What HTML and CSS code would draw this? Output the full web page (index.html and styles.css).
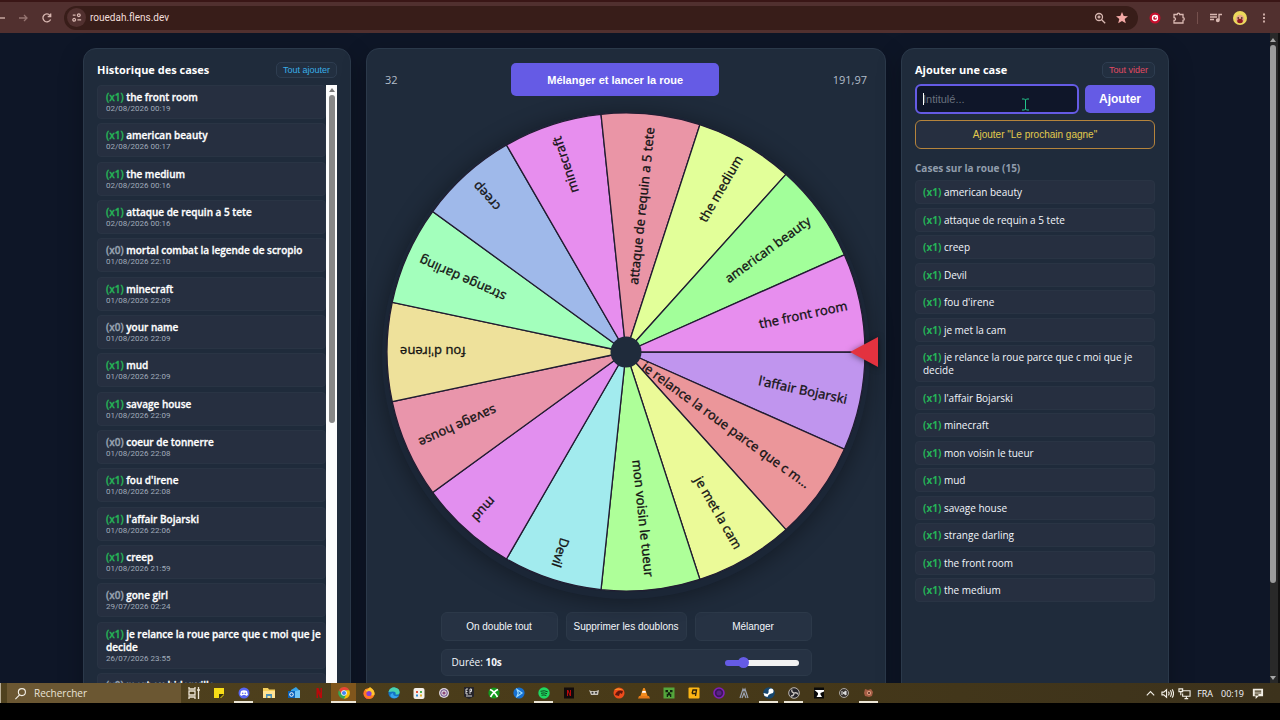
FILE: index.html
```html
<!DOCTYPE html>
<html lang="fr">
<head>
<meta charset="utf-8">
<title>Roue</title>
<link rel="stylesheet" href="styles.css">
</head>
<body>
<header class="toolbar">
  <button class="tb-btn back" aria-label="Précédent"><svg viewBox="0 0 14 14"><path d="M0 7h5"/></svg></button>
  <button class="tb-btn dim" aria-label="Suivant"><svg viewBox="0 0 14 14"><path d="M3 7h8M8 4l3 3-3 3"/></svg></button>
  <button class="tb-btn" aria-label="Actualiser"><svg viewBox="0 0 14 14"><path d="M10.600 8.500A4 4 0 1 1 10 4.300M10.700 2.500v3H7.700"/></svg></button>
  <div class="omnibox">
    <span class="site"><svg viewBox="0 0 14 14"><path d="M3 4.500h3M8 9.500h4"/><circle cx="9.500" cy="4.500" r="1.500"/><circle cx="4.500" cy="9.500" r="1.500"/></svg></span>
    <span class="url">rouedah.flens.dev</span>
    <svg viewBox="0 0 14 14"><circle cx="6" cy="6" r="3.500"/><path d="M8.700 8.700l3.500 3.500M4.500 6h3M6 4.500v3"/></svg>
    <svg class="star" viewBox="0 0 14 14"><path d="M7 1l1.700 4 4.300.3-3.300 2.700 1.100 4.200L7 9.900l-3.800 2.300L4.300 8 1 5.300 5.300 5z"/></svg>
  </div>
  <svg viewBox="0 0 14 14"><circle cx="7" cy="7" r="5.500" fill="#c8102e" stroke="none"/><circle cx="7" cy="7" r="2.500" stroke="#fff"/><path d="M7 7l2.500-2.500" stroke="#fff"/></svg>
  <svg viewBox="0 0 14 14"><path d="M2 3.500h3.200a1.300 1.300 0 0 1 2.600 0H11v3.200a1.300 1.300 0 0 1 0 2.600V12H2V9.500a1.500 1.500 0 0 0 0-3z"/></svg>
  <span class="sep"></span>
  <svg viewBox="0 0 14 14"><path d="M1 3.500h7M1 6h7M1 8.500h4M10 9V3.500h3"/><circle cx="8.800" cy="9.300" r="1.300" fill="#d9b8b2"/></svg>
  <svg class="avatar" viewBox="0 0 14 14"><circle cx="7" cy="7" r="7" fill="#ecd95b" stroke="none"/><circle cx="7" cy="8" r="4.300" fill="#e7a987" stroke="none"/><ellipse cx="7" cy="10" rx="2.800" ry="2.200" fill="#8e1a22" stroke="none"/><path d="M4.500 7h1.500M8 7h1.500" stroke="#3b2020"/></svg>
  <svg viewBox="0 0 14 14"><path d="M7 2.500v2M7 6v2M7 9.500v2" stroke-width="1.800"/></svg>
</header>

<main class="viewport">
  <div class="page">
    <section class="panel side">
      <div class="head"><h2>Historique des cases</h2><button class="mini blue">Tout ajouter</button></div>
      <div class="scroller">
        <ul class="history">
          <li><p><b class="on">(x1)</b> the front room</p><time>02/08/2026 00:19</time></li>
          <li><p><b class="on">(x1)</b> american beauty</p><time>02/08/2026 00:17</time></li>
          <li><p><b class="on">(x1)</b> the medium</p><time>02/08/2026 00:16</time></li>
          <li><p><b class="on">(x1)</b> attaque de requin a 5 tete</p><time>02/08/2026 00:16</time></li>
          <li><p><b>(x0)</b> mortal combat la legende de scropio</p><time>01/08/2026 22:10</time></li>
          <li><p><b class="on">(x1)</b> minecraft</p><time>01/08/2026 22:09</time></li>
          <li><p><b>(x0)</b> your name</p><time>01/08/2026 22:09</time></li>
          <li><p><b class="on">(x1)</b> mud</p><time>01/08/2026 22:09</time></li>
          <li><p><b class="on">(x1)</b> savage house</p><time>01/08/2026 22:09</time></li>
          <li><p><b>(x0)</b> coeur de tonnerre</p><time>01/08/2026 22:08</time></li>
          <li><p><b class="on">(x1)</b> fou d'irene</p><time>01/08/2026 22:08</time></li>
          <li><p><b class="on">(x1)</b> l'affair Bojarski</p><time>01/08/2026 22:06</time></li>
          <li><p><b class="on">(x1)</b> creep</p><time>01/08/2026 21:59</time></li>
          <li><p><b>(x0)</b> gone girl</p><time>29/07/2026 02:24</time></li>
          <li><p><b class="on">(x1)</b> je relance la roue parce que c moi que je decide</p><time>26/07/2026 23:55</time></li>
          <li><p><b>(x0)</b> mort au bidonville</p></li>
        </ul>
        <div class="bar light"><svg viewBox="0 0 10 10"><path d="M5 3l3 4H2z"/></svg><i></i></div>
      </div>
    </section>

    <section class="panel center">
      <div class="launch"><span>32</span><button class="primary">Mélanger et lancer la roue</button><span>191,97</span></div>
      <div class="wheel">
        <svg viewBox="-240 -240 480 480" role="img" aria-label="Roue">
          <defs><path id="slice" d="M0 0H239A239 239 0 0 1 218.340 97.210Z"/></defs>
          <g><use href="#slice" fill="#c095ee"/><text transform="rotate(12)" x="226" y="5">l'affair Bojarski</text></g>
          <g transform="rotate(24)"><use href="#slice" fill="#eb969a"/><text transform="rotate(12)" x="226" y="5">je relance la roue parce que c m...</text></g>
          <g transform="rotate(48)"><use href="#slice" fill="#ebfa98"/><text transform="rotate(12)" x="226" y="5">je met la cam</text></g>
          <g transform="rotate(72)"><use href="#slice" fill="#aeff99"/><text transform="rotate(12)" x="226" y="5">mon voisin le tueur</text></g>
          <g transform="rotate(96)"><use href="#slice" fill="#a2ebee"/><text transform="rotate(12)" x="226" y="5">Devil</text></g>
          <g transform="rotate(120)"><use href="#slice" fill="#e28fef"/><text transform="rotate(12)" x="226" y="5">mud</text></g>
          <g transform="rotate(144)"><use href="#slice" fill="#e995ab"/><text transform="rotate(12)" x="226" y="5">savage house</text></g>
          <g transform="rotate(168)"><use href="#slice" fill="#eee19b"/><text transform="rotate(12)" x="226" y="5">fou d'irene</text></g>
          <g transform="rotate(192)"><use href="#slice" fill="#a3ffbc"/><text transform="rotate(12)" x="226" y="5">strange darling</text></g>
          <g transform="rotate(216)"><use href="#slice" fill="#9fb9ea"/><text transform="rotate(12)" x="226" y="5">creep</text></g>
          <g transform="rotate(240)"><use href="#slice" fill="#e78eee"/><text transform="rotate(12)" x="226" y="5">minecraft</text></g>
          <g transform="rotate(264)"><use href="#slice" fill="#ea95a6"/><text transform="rotate(12)" x="226" y="5">attaque de requin a 5 tete</text></g>
          <g transform="rotate(288)"><use href="#slice" fill="#e2ff99"/><text transform="rotate(12)" x="226" y="5">the medium</text></g>
          <g transform="rotate(312)"><use href="#slice" fill="#a2ff9a"/><text transform="rotate(12)" x="226" y="5">american beauty</text></g>
          <g transform="rotate(336)"><use href="#slice" fill="#e78eee"/><text transform="rotate(12)" x="226" y="5">the front room</text></g>
          <circle r="15.500" fill="#1f2b3b"/>
        </svg>
        <svg class="pointer" viewBox="0 0 28 32"><path d="M0 16L28 1V31Z"/></svg>
      </div>
      <div class="controls">
        <button>On double tout</button><button>Supprimer les doublons</button><button>Mélanger</button>
        <div class="duration"><label for="duree">Durée: <strong>10s</strong></label><input id="duree" type="range" min="0" max="60" value="13"></div>
      </div>
    </section>

    <section class="panel side">
      <div class="head"><h2>Ajouter une case</h2><button class="mini red">Tout vider</button></div>
      <form class="add">
        <div class="field"><input type="text" placeholder="Intitulé..." aria-label="Intitulé"><span class="caret"></span>
          <svg class="ibeam" viewBox="0 0 9 13"><path d="M1 1h2.500l1 1 1-1H8M4.500 2v9M1 12h2.500l1-1 1 1H8"/></svg></div>
        <button type="button" class="primary">Ajouter</button>
      </form>
      <button class="next">Ajouter "Le prochain gagne"</button>
      <h3>Cases sur la roue (15)</h3>
      <ul class="cases">
        <li><b>(x1)</b> american beauty</li>
        <li><b>(x1)</b> attaque de requin a 5 tete</li>
        <li><b>(x1)</b> creep</li>
        <li><b>(x1)</b> Devil</li>
        <li><b>(x1)</b> fou d'irene</li>
        <li><b>(x1)</b> je met la cam</li>
        <li><b>(x1)</b> je relance la roue parce que c moi que je decide</li>
        <li><b>(x1)</b> l'affair Bojarski</li>
        <li><b>(x1)</b> minecraft</li>
        <li><b>(x1)</b> mon voisin le tueur</li>
        <li><b>(x1)</b> mud</li>
        <li><b>(x1)</b> savage house</li>
        <li><b>(x1)</b> strange darling</li>
        <li><b>(x1)</b> the front room</li>
        <li><b>(x1)</b> the medium</li>
      </ul>
    </section>
  </div>
  <div class="bar dark"><svg viewBox="0 0 10 10"><path d="M5 3l3 4H2z"/></svg><i></i><svg class="down" viewBox="0 0 10 10"><path d="M5 7l3-4H2z"/></svg></div>
</main>

<footer class="taskbar">
  <span class="edge"></span>
  <label class="search"><svg viewBox="0 0 14 14"><circle cx="8.500" cy="5.500" r="3.800"/><path d="M6 8.500L1.500 13"/></svg><input type="text" placeholder="Rechercher" aria-label="Rechercher"></label>
  <nav class="apps">
    <span><svg viewBox="0 0 14 14"><path d="M2 1v2h6V1M2 13v-2h6v2M2 5h6v4H2zM11.500 1v12M10 4h3" fill="none" stroke="#eee6d6" stroke-width="1.300"/></svg></span>
    <span><svg viewBox="0 0 14 14"><path d="M2 2h10v7l-3 3H2z" fill="#f7dc17"/><path d="M7 8h5l-4 4H7z" fill="#39320e"/></svg></span>
    <span class="open"><svg viewBox="0 0 14 14"><circle cx="7" cy="7" r="5.500" fill="#5865f2"/><path d="M4 5q3-1.500 6 0l1 4-2 1-.6-1H5.600L5 10 3 9z" fill="#fff"/><circle cx="5.700" cy="7.300" r=".8" fill="#5865f2"/><circle cx="8.300" cy="7.300" r=".8" fill="#5865f2"/></svg></span>
    <span><svg viewBox="0 0 14 14"><path d="M1 2h5l1 1.500h6V12H1z" fill="#f5cf5c"/><path d="M1 5h12v7H1z" fill="#ffe394"/><path d="M4 8h6v4H8.500v-2h-3v2H4z" fill="#4a90b8"/></svg></span>
    <span><svg viewBox="0 0 14 14"><path d="M4 4l5-3 4 4v7H4z" fill="#35a2e8"/><path d="M5 6l8-2v8H5z" fill="#70c5f5"/><path d="M1 5h7v7H1z" fill="#0b62b8"/><circle cx="4.500" cy="8.500" r="1.800" fill="none" stroke="#fff"/></svg></span>
    <span><svg viewBox="0 0 14 14"><path d="M4.500 2h2l2 5V2h1.500v10H8L6 7v5H4.500z" fill="#b9090b"/></svg></span>
    <span class="open active"><svg viewBox="0 0 14 14"><circle cx="7" cy="7" r="5.800" fill="#34a853"/><path d="M2 4a5.800 5.800 0 0 1 10.200.3H7L4.500 8z" fill="#ea4335"/><path d="M12.200 4.300A5.800 5.800 0 0 1 7 12.800L9.500 8 9 4.300z" fill="#fbbc05"/><circle cx="7" cy="7" r="2.800" fill="#fff"/><circle cx="7" cy="7" r="2.100" fill="#4285f4"/></svg></span>
    <span><svg viewBox="0 0 14 14"><circle cx="7" cy="7.500" r="5.500" fill="#ff7a22"/><path d="M3 3l2 1 3-3q5 3 4.500 8-5 2-9.500-6z" fill="#ffc72e"/><circle cx="7" cy="7.500" r="2.600" fill="#8b3fd1"/><path d="M1.500 5q-1 6 5.500 8-5 1-5.500-8z" fill="#ff3a57"/></svg></span>
    <span><svg viewBox="0 0 14 14"><circle cx="7" cy="7" r="5.600" fill="#1373c4"/><path d="M1.500 6Q3 1 8 1.400 13 2.300 12.600 7 12 9 8.500 8.500 10 4 1.500 6z" fill="#48d2b0"/><path d="M6 7q0 4 6 3-4 4-8 1-2-3 2-4z" fill="#35a4ed"/></svg></span>
    <span><svg viewBox="0 0 14 14"><rect x="1.500" y="2" width="11" height="11" rx="2" fill="#f4f0ea"/><path d="M4 5h2v2H4z" fill="#e5533b"/><path d="M8 5h2v2H8z" fill="#4caf50"/><path d="M4 8.500h2v2H4z" fill="#2d89d8"/><path d="M8 8.500h2v2H8z" fill="#e0ad27"/></svg></span>
    <span><svg viewBox="0 0 14 14"><circle cx="7" cy="7" r="5" fill="#ddd6dc"/><circle cx="7" cy="7" r="3.300" fill="none" stroke="#6a4b8a"/><circle cx="7" cy="7" r="1.600" fill="#8c4878"/></svg></span>
    <span><svg viewBox="0 0 14 14"><path d="M2 1h10v9.500L7 13l-5-2.500z" fill="#25242a"/><path d="M6 3H4v5h2M4 5.500h1.500M8 8V3h1.500v2.500H8M4 10h6" fill="none" stroke="#e8e8e8" stroke-width=".9"/></svg></span>
    <span><svg viewBox="0 0 14 14"><circle cx="7" cy="7" r="5.600" fill="#149a1d"/><path d="M3 3.500Q7 5 10.500 11M11 3.500Q7 5 3.500 11" stroke="#fff" stroke-width="1.700" fill="none"/></svg></span>
    <span><svg viewBox="0 0 14 14"><circle cx="7" cy="7" r="5.600" fill="#1670d0"/><path d="M5 3.500l5 3.500-5 3.500 1.200-3.500z" fill="none" stroke="#9bdcff" stroke-width="1.200"/></svg></span>
    <span class="open"><svg viewBox="0 0 14 14"><circle cx="7" cy="7" r="5.700" fill="#1ed760"/><path d="M3.500 5.300q4-1.300 7.200.5M4 7.300q3.500-1 6 .4M4.500 9.200q2.700-.7 4.800.3" stroke="#10451f" fill="none"/></svg></span>
    <span><svg viewBox="0 0 14 14"><path d="M2 1.500h10v11H2z" fill="#120b0b"/><path d="M5 4h1.300L8 8V4h1v6H7.800L6 6v4H5z" fill="#b9090b"/></svg></span>
    <span><svg viewBox="0 0 14 14"><path d="M2 4l2 1h5l3-1-1 5H4z" fill="#c8c3b9"/><circle cx="5.500" cy="6.800" r="1" fill="#333"/><circle cx="9" cy="6.800" r="1" fill="#333"/></svg></span>
    <span><svg viewBox="0 0 14 14"><circle cx="7" cy="7" r="5.500" fill="#ef4c1b"/><path d="M3 9q2-6 8-4l-1 3-2-1-1 3z" fill="#64160d"/><path d="M2 4q4-3 9 0-5-1-9 0z" fill="#ffae31"/></svg></span>
    <span><svg viewBox="0 0 14 14"><path d="M6.300 2h1.400L11 11H3z" fill="#f28b1d"/><path d="M5.500 5h3l.6 1.800H4.900z" fill="#fff"/><path d="M2 10h10l1 2.500H1z" fill="#e57917"/></svg></span>
    <span><svg viewBox="0 0 14 14"><path d="M1.500 1.500h11v11h-11z" fill="#54a63c"/><path d="M3.500 4h2.500v2.300H3.500zM8 4h2.500v2.300H8zM6 6.300h2v1.500h1.300V11H8V9.500H6V11H4.700V7.800H6z" fill="#10220d"/></svg></span>
    <span><svg viewBox="0 0 14 14"><rect x="1.500" y="1.500" width="11" height="11" rx="1" fill="#fcb514"/><path d="M5 7.500L6 4h3.500l-1 6M5 7.500h4" stroke="#2b220b" fill="none" stroke-width="1.300"/></svg></span>
    <span><svg viewBox="0 0 14 14"><circle cx="7" cy="7" r="5" fill="#3b155b" stroke="#8120b8" stroke-width="1.600"/><circle cx="7" cy="7" r="2.500" fill="#5a2386"/></svg></span>
    <span><svg viewBox="0 0 14 14"><path d="M3 12l3-9 1 2 1-2 3 9M5 12l2-5 2 5" fill="none" stroke="#9ca4b4" stroke-width="1.200"/></svg></span>
    <span class="open"><svg viewBox="0 0 14 14"><circle cx="7" cy="7" r="5.800" fill="#16466e"/><circle cx="9" cy="5" r="2.500" fill="#fff"/><path d="M1.500 7l4 1 2-3 2 2-3 2-1 2-3-1z" fill="#fff"/></svg></span>
    <span class="open"><svg viewBox="0 0 14 14"><circle cx="7" cy="7" r="5.300" fill="#26252b" stroke="#bdb7b3"/><path d="M7 7q-3-1-2-3.500M7 7q3-1 4 1.500M7 7q0 3-3 3" stroke="#c9c4c0" fill="none" stroke-width="1.300"/></svg></span>
    <span><svg viewBox="0 0 14 14"><path d="M2 1.500h10v11H2z" fill="#090909"/><path d="M2.500 4H12v1.500L8.500 7v1.500L10 11H4.500L6 8.500V7z" fill="#fff"/></svg></span>
    <span><svg viewBox="0 0 14 14"><circle cx="7" cy="7" r="4.500" fill="#393431" stroke="#aaa6a0"/><path d="M5 5v4M9 5L6 7l3 2z" stroke="#ddd" fill="#ddd"/></svg></span>
    <span class="open"><svg viewBox="0 0 14 14"><path d="M3 3l3 1 3-1 2 3-1 4-3 1-4-1-1-3z" fill="#a65d45"/><circle cx="7" cy="7" r="2" fill="#e1a486"/><circle cx="7" cy="7" r="1" fill="#4d241c"/></svg></span>
  </nav>
  <div class="tray">
    <svg viewBox="0 0 14 14"><path d="M3 9l4-4 4 4"/></svg>
    <svg viewBox="0 0 14 14"><path d="M1 5.500h2L6 3v8L3 8.500H1zM8 5q1.500 2 0 4M10 3.500q2.500 3.500 0 7M12 2.500q3 4.500 0 9"/></svg>
    <svg viewBox="0 0 14 14"><path d="M4 4h9v6H5V7M7 12.500h4M9 10v2M1 2h4v3H1zM3 5v4"/></svg>
    <span class="lang">FRA</span><span>00:19</span>
    <svg class="note" viewBox="0 0 14 14"><path d="M2 2h11v8H8l-3 3v-3H2z" fill="#f3efe6"/><path d="M4 4.500h7M4 6.500h7M4 8.500h4" stroke="#42371b"/></svg>
  </div>
</footer>
</body>
</html>
```

FILE: styles.css
```css
* { box-sizing: border-box; }
body {
  margin: 0;
  height: 100vh;
  padding-bottom: 17px;
  display: flex;
  flex-direction: column;
  overflow: hidden;
  background: #000;
  color: #f3f6fb;
  font: 10px/13px "Open Sans", "Noto Sans", sans-serif;
}
h2, h3, p, ul { margin: 0; padding: 0; list-style: none; }
button, input { font-family: "Liberation Sans", Arial, sans-serif; color: inherit; margin: 0; }
button { padding: 0; }
svg { display: block; flex: none; }

/* Browser toolbar */
.toolbar {
  flex: none;
  height: 33px;
  display: flex;
  align-items: center;
  gap: 10px;
  padding-right: 9px;
  border-top: 2px solid #3a1616;
  background: #51302f;
}
.toolbar svg { width: 14px; height: 14px; fill: none; stroke: #d9b8b2; stroke-width: 1.300; }
.tb-btn { border: 0; background: none; width: 14px; }
.back { width: 6px; overflow: hidden; }
.dim { opacity: .5; }
.omnibox {
  flex: 1;
  height: 24px;
  padding: 0 9px 0 3px;
  display: flex;
  align-items: center;
  gap: 8px;
  border-radius: 12px;
  background: #381d19;
}
.site { width: 19px; height: 19px; margin-right: -4px; border-radius: 50%; background: #51302f; display: grid; place-items: center; }
.site svg { width: 13px; height: 13px; }
.url { flex: 1; font: 10px/16px Roboto, sans-serif; color: #f2dfdb; }
.toolbar .star { fill: #f4a9a6; stroke: none; }
.sep { width: 1px; height: 12px; margin: 0 1px; background: #75504d; }

/* Page */
.viewport { flex: 1; min-height: 0; display: flex; overflow: hidden; background: #0e1627; }
.page {
  flex: 1;
  display: grid;
  grid-template-columns: 268px minmax(0, 520px) 268px;
  justify-content: center;
  gap: 15px;
  padding: 15px 18px 0 0;
  overflow: hidden;
}
.panel {
  padding: 13px 13px 0;
  min-height: 680px;
  border: 1px solid #2b394a;
  border-radius: 13px;
  background: #1f2b3b;
  box-shadow: 0 8px 24px rgba(0, 0, 0, .25);
}
.head { display: flex; justify-content: space-between; align-items: center; height: 16px; }
h2 { font-size: 11px; line-height: 16px; color: #fff; }
.mini { height: 16px; padding: 0 6px; border: 1px solid #2e3d50; border-radius: 5px; background: #222f40; font-size: 9px; }
.blue { color: #38aee8; }
.red { color: #e24a62; }

.scroller { display: flex; height: 640px; margin-top: 7px; overflow: hidden; }
.history { flex: 1; height: 622px; display: flex; flex-direction: column; justify-content: space-between; }
.history li { min-height: 34px; padding: 5px 0 4px 8px; border: 1px solid #293444; border-radius: 4px; background: #262f40; }
.history p { font-weight: 600; color: #fff; -webkit-text-stroke: .3px; }
.history b { color: #98a3b1; font-weight: 600; }
.history .on, .cases b { color: #25b457; }
.history time { display: block; font: 8px/10px Roboto, sans-serif; color: #a0abba; }

.bar { width: 11px; display: flex; flex-direction: column; align-items: center; }
.bar svg { width: 10px; height: 10px; fill: #777; }
.bar i { width: 6px; border-radius: 3px; background: #878787; }
.light { background: #fcfcfc; }
.light i { height: 328px; }
.dark { width: 10px; padding: 2px 2px 0 0; border-right: 2px solid #111; background: #292929; }
.dark svg { fill: #a6a6a6; }
.dark i { height: 538px; background: #9b9b9b; }
.dark .down { margin-top: auto; }

.center { padding: 14px 18px 0; }
.launch { display: flex; justify-content: space-between; align-items: center; font-size: 11px; color: #b3bdca; }
.launch .primary { width: 208px; font-size: 11px; }
.primary { height: 33px; border: 0; border-radius: 5px; background: #655be5; color: #fff; font-size: 12px; font-weight: 700; }
.wheel { position: relative; margin: 16px auto 0; width: 480px; max-width: 100%; border-radius: 50%; box-shadow: 0 3px 0 4px #1b2636, 0 6px 22px 5px rgba(0, 0, 0, .35); }
.wheel svg { width: 100%; }
.wheel use { stroke: #211c31; stroke-width: 1.300; }
.wheel text { text-anchor: end; font: 13px "Noto Sans", sans-serif; fill: #141414; stroke: #141414; stroke-width: .3; }
.wheel .pointer { position: absolute; right: -12px; top: 50%; width: 28px; height: 32px; margin-top: -16px; fill: #e3323f; filter: drop-shadow(0 1px 3px rgba(0, 0, 0, .5)); }
.controls { width: 371px; margin: 20px auto 0; display: grid; grid-template-columns: 117px 1fr 117px; gap: 8px; }
.controls button { height: 29px; border: 1px solid #2c3949; border-radius: 6px; background: #263243; font-size: 10px; }
.duration { grid-column: 1 / -1; height: 27px; padding: 0 12px 0 10px; display: flex; justify-content: space-between; align-items: center; border: 1px solid #2c3949; border-radius: 6px; background: #263243; }
.duration input { appearance: none; width: 74px; height: 6px; border-radius: 3px; background: linear-gradient(90deg, #655be5 24%, #f1f1f1 24%); }
.duration input::-webkit-slider-thumb { appearance: none; width: 11px; height: 11px; border-radius: 50%; background: #655be5; }

.add { display: flex; gap: 6px; margin-top: 6px; }
.field { flex: 1; position: relative; }
.field input { width: 100%; height: 30px; padding: 0 6px; border: 2px solid #655be5; border-radius: 6px; background: #0f1629; font-size: 11px; }
.field input::placeholder { color: #69717e; opacity: 1; }
.caret { position: absolute; left: 8px; top: 9px; width: 1px; height: 12px; background: #fff; }
.ibeam { position: absolute; left: 106px; top: 14px; width: 9px; height: 13px; fill: none; stroke: #22c58b; }
.add .primary { width: 70px; height: 28px; margin-top: 1px; }
.next { width: 100%; height: 29px; margin-top: 6px; display: block; border: 1px solid #b5843c; border-radius: 6px; background: #262f40; color: #e2cb4d; font-size: 10px; }
h3 { margin: 13px 0 5px; font-size: 10px; line-height: 13px; color: #919dac; }
.cases { min-height: 422px; display: flex; flex-direction: column; justify-content: space-between; }
.cases li { padding: 5px 7px 4px; border: 1px solid #293444; border-radius: 4px; background: #262f40; font-weight: 500; }

/* Taskbar */
.taskbar { flex: none; height: 20px; display: flex; background: linear-gradient(90deg, #50421f, #483a18 50%, #3c321c); }
.edge { width: 7px; border-left: 1px solid #b9ae96; }
.search { width: 174px; display: flex; align-items: center; gap: 7px; padding-left: 7px; background: #6b5732; }
.search svg, .tray svg { width: 13px; height: 13px; fill: none; stroke: #f3efe6; stroke-width: 1.200; }
.search input { flex: 1; min-width: 0; padding: 0; border: 0; background: none; font: 10px/16px "Open Sans", sans-serif; }
.search input::placeholder { color: #eae4d8; opacity: 1; }
.apps { display: flex; }
.apps span { width: 25px; display: grid; place-items: center; }
.apps svg { width: 14px; height: 14px; }
.apps .open { background: linear-gradient(#ece5d5, #ece5d5) center bottom / 19px 2px no-repeat; }
.apps .active { background: linear-gradient(#ece5d5, #ece5d5) center bottom / 25px 2px no-repeat #80561c; }
.tray { margin-left: auto; padding-right: 16px; display: flex; align-items: center; gap: 4px; font-size: 9px; }
.tray .lang { margin: 0 4px 0 2px; }
.tray .note { margin-left: 3px; stroke: none; }
```
